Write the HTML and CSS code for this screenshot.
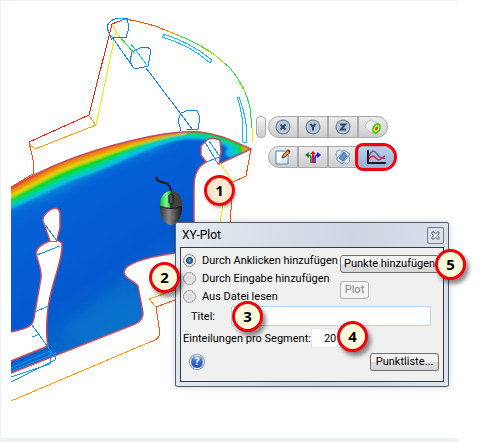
FILE: index.html
```html
<!DOCTYPE html>
<html lang="de">
<head>
  <meta charset="UTF-8">
  <meta name="viewport" content="width=device-width, initial-scale=1.0">
  <title>XY-Plot</title>
  <link rel="stylesheet" href="styles.css">
</head>
<body>
  <main class="scene">
    <!-- Schnittebene mit Ergebnisfarben -->
    <svg class="model" width="270" height="438" viewBox="0 0 270 438" aria-hidden="true">
      <defs>
        <linearGradient id="blau" x1="0" y1="0" x2="0.6" y2="1">
          <stop offset="0" stop-color="#0c78d2"/>
          <stop offset="0.35" stop-color="#0560d8"/>
          <stop offset="0.6" stop-color="#0458cf"/>
          <stop offset="0.85" stop-color="#0678c8"/>
          <stop offset="1" stop-color="#0463c8"/>
        </linearGradient>
        <filter id="weich" x="-20%" y="-20%" width="140%" height="140%"><feGaussianBlur stdDeviation="1"/></filter>
        <filter id="weicher" x="-20%" y="-40%" width="140%" height="180%"><feGaussianBlur stdDeviation="5"/></filter>
        <clipPath id="form">
          <path d="M11 188C50 164 92 150 130 141C158 134 180 131 200 132C220 134 235 142 251 149L219 164L221 152L220 140Q211 137 207 140L201 146V155L206 162C197 167 194 175 194 188V252L175 253C155 256 125 262 124 272C124 279 135 281 138 286L143 313Q143 322 130 326L11 373V361L48 346C45 330 47 305 53 285C57 270 63 256 62 243L57 240L60 228V213Q59 208 55 208C49 209 42 216 43 221L50 241C44 243 36 247 36 254C38 262 42 270 41 278L34 318C33 328 23 329 11 332Z"/>
        </clipPath>
        <linearGradient id="maus" x1="0" x2="1">
          <stop offset="0" stop-color="#333"/>
          <stop offset="0.4" stop-color="#888"/>
          <stop offset="1" stop-color="#181818"/>
        </linearGradient>
        <linearGradient id="taste" x1="0" x2="1">
          <stop offset="0" stop-color="#08c52b"/>
          <stop offset="0.6" stop-color="#86f69a"/>
          <stop offset="1" stop-color="#0a9f2b"/>
        </linearGradient>
      </defs>

      <g clip-path="url(#form)">
        <path fill="url(#blau)" d="M0 110H260V390H0Z"/>
        <path fill="#0a95d8" opacity="0.6" filter="url(#weicher)" d="M0 185L90 155L165 137L175 144L110 168L50 198L0 215Z"/>
        <path fill="#0878cc" opacity="0.5" filter="url(#weicher)" d="M60 330L130 275L145 315L90 350Z"/>
        <g filter="url(#weich)">
          <path fill="#08bfe0" d="M5 186C70 150 140 130 192 130C225 130 246 143 254 149L230 158Q222 154 228 148Q216 139 188 139C158 142 128 160 94 173C62 183 36 200 5 211Z"/>
          <path fill="#06d5a0" d="M5 186C70 150 140 130 192 130C225 130 246 143 254 149L236 155Q233 150 236 147Q216 136 188 136C158 138 122 156 94 170C62 179 36 196 5 208Z"/>
          <path fill="#10d820" d="M5 186C70 150 140 130 192 130C225 130 246 143 254 149L238 154Q240 150 238 147Q216 134 188 134C155 137 118 156 90 167C60 176 36 192 5 205Z"/>
          <path fill="#e5d310" d="M5 186C70 150 140 130 190 130L184 134C145 140 115 153 86 163C60 171 35 186 5 201Z"/>
          <path fill="#ef8c08" d="M5 186C70 150 140 130 188 130L180 134C140 140 112 151 84 160C60 167 35 182 5 197Z"/>
          <path fill="#e04a18" d="M5 186C70 150 140 130 184 130L174 133C140 138 112 146 84 155C58 163 35 177 5 193Z"/>
          <path fill="#e8a010" d="M242 145L252 149L243 153Z"/>
        </g>
        <g fill="none" stroke="#1494f0">
          <path d="M11 368L50 351M11 371L51 355"/>
        </g>
      </g>

      <!-- Rand der Schnittfläche -->
      <g fill="none" stroke="#c34c62" stroke-width="1.500">
        <path d="M11 188C50 164 92 150 130 141C158 134 180 131 200 132C220 134 235 142 251 149L219 164L221 152L220 140Q211 137 207 140L201 146V155L206 162C197 167 194 175 194 188V252"/>
        <path d="M175 253C155 256 125 262 124 272C124 279 135 281 138 286L143 313Q143 322 130 326L11 373M11 361L48 346C45 330 47 305 53 285C57 270 63 256 62 243L57 240L60 228V213Q59 208 55 208C49 209 42 216 43 221L50 241C44 243 36 247 36 254C38 262 42 270 41 278L34 318C33 328 23 329 11 332"/>
      </g>

      <!-- Bauteilkanten -->
      <g class="edges">
        <path stroke="#f81c10" d="M29 142L89 115M89 115L112 24L125 19"/>
        <path stroke="#ff4c08" d="M29 142L34 164L33 174L11 187M125 19Q150 23 165 30M233 182L246 176L251 149M232 198L230 222"/>
        <path stroke="#ff9a08" d="M30 144L35 149L96 125L89 116M165 30L180 36M149 299L175 290M11 401L150 342"/>
        <path stroke="#e6ee08" d="M96 125L116 31L112 24M116 31L119 36M220 163L233 182M223 205L220 222M252 142V128"/>
        <path stroke="#20e030" d="M119 36L135 54M180 36Q200 44 215 55L230 68Q246 87 250 108L252 128"/>
        <path stroke="#9be820" d="M203 48L215 55L225 64M239 82L245 92"/>
        <path stroke="#f85010" d="M175 300L156 307L160 333Q159 340 150 342"/>
        <path stroke="#ef9f08" d="M156 307L149 299"/>
        <path stroke="#1080f0" d="M112 40L107 28Q108 20 118 18L127 18L129 27L126 38L112 37L133 67L135 69L148 66L151 50Q148 46 140 48L132 52L130 61L133 67M146 68L193 130M181 131L178 120L181 113L189 110L197 111L200 117L198 129L187 129"/>
        <path stroke="#18baf0" d="M131 44L147 65M118 18L127 20M163 34Q190 42 212 60L210 63Q190 45 162 37L166 34M237 97Q244 115 243 142L247 143Q248 120 239 97Z"/>
        <path stroke="#1494f0" d="M205 142L218 164M209 141L221 158M206 162L220 157M43 222L57 241M37 255L60 246M35 312L48 306M32 325L55 357M32 337L40 334M11 377L50 364V350M11 382L55 360V352M50 242L57 241"/>
      </g>

      <!-- Maus mit gedrückter linker Taste -->
      <path fill="none" stroke="#151515" stroke-width="2" d="M156 177C158 186 168 178 171 190V197"/>
      <path fill="url(#maus)" d="M160 207C160 196 164 191 171 191S182 196 182 207C182 218 177 225 171 225S160 218 160 207Z"/>
      <path fill="url(#taste)" d="M160 206C160 196 164 192 171 191V208Q165 208 160 206Z"/>
      <path fill="#414141" d="M171 191C178 191 182 196 182 206Q177 208 171 208Z"/>
      <path fill="none" stroke="#111" d="M160 206Q171 211 182 206M171 202V208"/>
      <rect x="169" y="194" width="4" height="10" rx="2" fill="#555" stroke="#111"/>
    </svg>

    <div class="toolbars">
      <div class="toolbar">
        <span class="handle"></span>
        <div class="pill">
          <button type="button" aria-label="Schnitt in X">
            <svg width="16" height="16" viewBox="0 0 16 16"><circle class="axis" cx="8" cy="8" r="7"/><path class="glyph" d="M5.500 5.500L10.500 10.500M10.500 5.500L5.500 10.500"/></svg>
          </button>
          <button type="button" aria-label="Schnitt in Y">
            <svg width="16" height="16" viewBox="0 0 16 16"><circle class="axis" cx="8" cy="8" r="7"/><path class="glyph" d="M5.500 5L8 8L10.500 5M8 8V11.500"/></svg>
          </button>
          <button type="button" aria-label="Schnitt in Z">
            <svg width="16" height="16" viewBox="0 0 16 16"><circle class="axis" cx="8" cy="8" r="7"/><path class="glyph" d="M5 5.500H10L6 10.500H11"/></svg>
          </button>
          <button type="button" aria-label="Schnittfläche">
            <svg width="18" height="16" viewBox="0 0 18 16"><path d="M1 7Q2 2 7 1L15 5L10 15L3 11Q1 10 1 7Z" fill="#f1f1f1" stroke="#bdbdbd"/><ellipse cx="12.500" cy="9.500" rx="4" ry="5.500" transform="rotate(25 12.500 9.500)" fill="#19c832"/><ellipse cx="12.500" cy="9.500" rx="2.600" ry="3.800" transform="rotate(25 12.500 9.500)" fill="#f3ef20"/><ellipse cx="12.500" cy="9.500" rx="1.300" ry="2.200" transform="rotate(25 12.500 9.500)" fill="#ed3518"/></svg>
          </button>
        </div>
      </div>
      <div class="toolbar second">
        <div class="pill">
          <button type="button" aria-label="Bearbeiten">
            <svg width="18" height="18" viewBox="0 0 18 18"><path d="M2 3H14V16H2Z" fill="#fff" stroke="#4b7ebd"/><path d="M4 15L13 7V15Z" fill="#dce9f7"/><path d="M8 10L9 7L14 2L16 4L11 9Z" fill="#f0a43c" stroke="#513018"/><path d="M14 2L16 4" stroke="#b22" stroke-width="2"/></svg>
          </button>
          <button type="button" aria-label="Vektoren">
            <svg width="18" height="16" viewBox="0 0 18 16"><path d="M7 14V9Q7 6 3 6" fill="none" stroke="#168040" stroke-width="1.500"/><path d="M1 6L5 3V9Z" fill="#168040"/><path d="M11 14V9Q11 6 14 6" fill="none" stroke="#1718db" stroke-width="1.500"/><path d="M17 6L13 3V9Z" fill="#1718db"/><path d="M9 14V4" stroke="#e9121c" stroke-width="2"/><path d="M6 5L9 2L12 5Z" fill="#e9121c"/></svg>
          </button>
          <button type="button" aria-label="Ebene">
            <svg width="18" height="18" viewBox="0 0 18 18"><path d="M2 6Q2 2 6 2L15 9Q17 15 12 16L4 10Q2 9 2 6Z" fill="#e8eff6" stroke="#7a9dbf"/><path d="M2 11L10 2L16 6L8 16Z" fill="#d5e5f3" fill-opacity="0.700" stroke="#6c91b5"/><path d="M5 10L10 4L13 8L9 13Z" fill="#5b97cf" stroke="#47759f"/></svg>
          </button>
          <button type="button" class="active" aria-label="XY-Plot">
            <svg width="22" height="18" viewBox="0 0 22 18"><path d="M3 2V15H21" fill="none" stroke="#151b28" stroke-width="2"/><path d="M4 8C7 2 9 2 12 6S17 11 20 10" fill="none" stroke="#6758b0" stroke-width="1.500"/><path d="M4 11C7 6 9 8 12 11S17 9 20 8" fill="none" stroke="#ee1c2b" stroke-width="1.500"/></svg>
          </button>
        </div>
      </div>
    </div>

    <section class="dialog" aria-labelledby="dialog-titel">
      <header class="titlebar">
        <h1 id="dialog-titel">XY-Plot</h1>
        <button type="button" class="close" aria-label="Schließen">
          <svg width="9" height="9" viewBox="0 0 9 9"><path d="M1 1H3L4.500 3L6 1H8V3L6 4.500L8 6V8H6L4.500 6L3 8H1V6L3 4.500L1 3Z" fill="#fff" stroke="#555f6c"/></svg>
        </button>
      </header>
      <form class="content">
        <div class="top">
          <div class="choices">
            <label><input type="radio" name="quelle" checked>Durch Anklicken hinzufügen</label>
            <label><input type="radio" name="quelle">Durch Eingabe hinzufügen</label>
            <label><input type="radio" name="quelle">Aus Datei lesen</label>
          </div>
          <div class="actions">
            <button type="button" class="btn wide">Punkte hinzufügen</button>
            <button type="button" class="btn" disabled>Plot</button>
          </div>
        </div>
        <div class="row title-row">
          <label for="titel">Titel:</label>
          <input type="text" id="titel" name="titel">
        </div>
        <div class="row">
          <label for="segmente">Einteilungen pro Segment:</label>
          <input type="text" id="segmente" name="segmente" value="20">
        </div>
        <div class="footer">
          <button type="button" class="help" aria-label="Hilfe">?</button>
          <button type="button" class="btn">Punktliste...</button>
        </div>
      </form>
    </section>

    <span class="callout one">1</span>
    <span class="callout two">2</span>
    <span class="callout three">3</span>
    <span class="callout four">4</span>
    <span class="callout five">5</span>
  </main>
</body>
</html>
```

FILE: styles.css
```css
* {
  box-sizing: border-box;
}

body {
  margin: 0;
  background: #fff;
  font-family: Roboto, sans-serif;
  font-size: 11px;
  color: #000;
}

button,
input {
  font: inherit;
  color: inherit;
}

.scene {
  position: relative;
  min-height: 100vh;
  margin-right: 30px;
  border: solid #edf2fa;
  border-width: 1px 0 4px 1px;
}

.model {
  display: block;
  margin: -1px 0 0 -1px;
}

.edges {
  fill: none;
  shape-rendering: crispEdges;
}

/* Werkzeugleisten */
.toolbars {
  position: absolute;
  left: 255px;
  top: 115px;
  display: flex;
  flex-direction: column;
  gap: 8px;
}

.toolbar {
  display: flex;
  gap: 2px;
}

.toolbar.second {
  padding-left: 12px;
}

.handle {
  width: 10px;
  border: 1px solid #aaa;
  border-radius: 4px;
  background: linear-gradient(#f2f2f2, #ccc);
}

.pill {
  display: flex;
  height: 22px;
  border: 1px solid #aaa;
  border-radius: 11px;
  background: linear-gradient(#ececec, #cdcdcd);
}

.pill button {
  display: flex;
  align-items: center;
  justify-content: center;
  width: 30px;
  padding: 0;
  border: 0;
  border-right: 2px solid #aaa;
  background: none;
}

.pill button:last-child {
  width: 28px;
  border-right: 0;
}

.pill button.active {
  width: 34px;
  border-radius: 4px 10px 10px 4px;
  background: linear-gradient(#b9cfea, #93b4db);
  outline: 3px solid #f00010;
  outline-offset: 1px;
}

.axis {
  fill: #b4c8dc;
  stroke: #58708b;
}

.glyph {
  fill: none;
  stroke: #34465c;
  stroke-width: 2;
}

/* Dialog */
.dialog {
  position: absolute;
  left: 174px;
  top: 221px;
  width: 274px;
  padding: 0 4px 4px;
  border: 1px solid #535b64;
  border-radius: 2px;
  background: linear-gradient(100deg, #e4eaf0, #cdd6e2 60%, #dce4ed);
  box-shadow: 0 0 6px rgba(0, 0, 0, 0.2);
}

.titlebar {
  display: flex;
  align-items: center;
  justify-content: space-between;
  height: 24px;
  padding-left: 2px;
}

.titlebar h1 {
  margin: 0;
  font-size: 12px;
  font-weight: normal;
}

.close {
  display: flex;
  align-items: center;
  justify-content: center;
  width: 17px;
  height: 17px;
  padding: 0;
  border: 1px solid #737c87;
  border-radius: 2px;
  background: #dbe2eb;
}

.content {
  padding: 3px 4px 10px 2px;
  border: 1px solid #343a42;
  background: #f0f0f0;
}

.top {
  display: flex;
  justify-content: space-between;
}

.choices {
  display: flex;
  flex-direction: column;
}

.choices label {
  display: flex;
  align-items: center;
  gap: 6px;
  height: 18px;
  white-space: nowrap;
}

.choices input {
  appearance: none;
  width: 13px;
  height: 13px;
  margin: 0;
  border: 1px solid #8e8f8f;
  border-radius: 50%;
  background: radial-gradient(#ddd 40%, #f8f8f8 70%);
}

.choices input:checked {
  background: radial-gradient(circle, #56b6e0 0, #174a70 3px, #e8e8e8 4px);
}

.actions {
  display: flex;
  flex-direction: column;
  align-items: flex-start;
  gap: 8px;
  padding-top: 4px;
}

.btn {
  height: 18px;
  padding: 0 3px;
  border: 1px solid #707070;
  border-radius: 3px;
  background: linear-gradient(#f3f3f3 50%, #dedede 50%, #d6d6d6);
  line-height: 16px;
  white-space: nowrap;
}

.actions .btn {
  min-width: 29px;
}

.actions .wide {
  width: 99px;
  text-align: left;
}

.btn:disabled {
  border-color: #b0b0b0;
  background: #f4f4f4;
  color: #858585;
}

.row {
  display: flex;
  align-items: center;
  height: 22px;
  white-space: nowrap;
}

.row input {
  width: 40px;
  height: 20px;
  padding: 0 12px;
  border: 1px solid #e3e9ef;
  background: #fff;
}

.title-row {
  padding: 0 8px;
  gap: 16px;
}

.title-row input {
  flex: 1;
  border-color: #b9d1e6;
  border-radius: 2px;
}

.footer {
  display: flex;
  justify-content: space-between;
  align-items: center;
  padding: 4px 0 0 7px;
}

.footer .btn {
  width: 69px;
}

.help {
  width: 14px;
  height: 14px;
  padding: 0;
  border: 1px solid #fff;
  border-radius: 50%;
  background: linear-gradient(#5b90e0, #1c47b8);
  box-shadow: 0 0 0 1px #7089b5;
  color: #fff;
  font-weight: bold;
  line-height: 12px;
}

/* Nummerierte Hinweise */
.callout {
  position: absolute;
  width: 31px;
  height: 31px;
  border: 3px solid #f00008;
  border-radius: 50%;
  background: #fbfbdc;
  box-shadow: 3px 4px 4px rgba(0, 0, 0, 0.45);
  font-family: "Noto Sans", sans-serif;
  font-size: 15px;
  font-weight: bold;
  line-height: 25px;
  text-align: center;
}

.one {
  left: 203px;
  top: 174px;
  background: radial-gradient(#fff3df, #fbdcbc);
  box-shadow: 1px 2px 3px rgba(0, 0, 0, 0.3);
}

.two {
  left: 148px;
  top: 261px;
}

.three {
  left: 231px;
  top: 300px;
}

.four {
  left: 336px;
  top: 320px;
}

.five {
  left: 434px;
  top: 248px;
}
```
